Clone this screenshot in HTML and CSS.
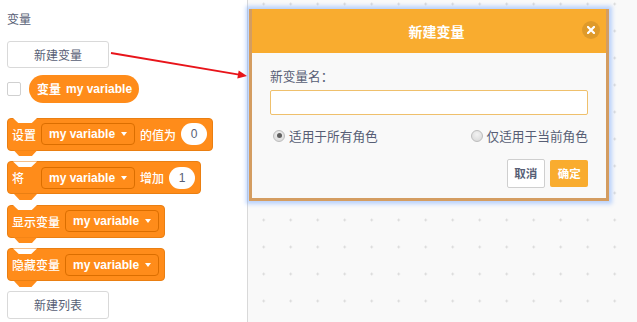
FILE: index.html
```html
<!DOCTYPE html>
<html lang="zh-CN">
<head>
<meta charset="utf-8">
<title>新建变量</title>
<link rel="stylesheet" href="styles.css">
</head>
<body>
<div class="app">
  <aside class="palette">
    <div class="cat-title">变量</div>
    <button class="pal-btn">新建变量</button>
    <div class="var-row">
      <span class="checkbox"></span>
      <span class="reporter"><span class="rep-cjk">变量</span><span class="vname">my variable</span></span>
    </div>
    <div class="block">
      <span class="lbl">设置</span>
      <span class="dd"><span class="vname">my variable</span><i class="tri"></i></span>
      <span class="lbl">的值为</span>
      <span class="oval">0</span>
    </div>
    <div class="block">
      <span class="lbl lbl-wide">将</span>
      <span class="dd"><span class="vname">my variable</span><i class="tri"></i></span>
      <span class="lbl">增加</span>
      <span class="oval">1</span>
    </div>
    <div class="block">
      <span class="lbl">显示变量</span>
      <span class="dd"><span class="vname">my variable</span><i class="tri"></i></span>
    </div>
    <div class="block">
      <span class="lbl">隐藏变量</span>
      <span class="dd"><span class="vname">my variable</span><i class="tri"></i></span>
    </div>
    <button class="pal-btn pal-btn-last">新建列表</button>
  </aside>
  <main class="canvas"></main>

  <div class="modal">
    <div class="modal-head">
      <div class="modal-title">新建变量</div>
      <span class="close">
        <svg width="8" height="8" viewBox="0 0 8 8"><path d="M1 1 L7 7 M7 1 L1 7" stroke="#fff" stroke-width="2.2" stroke-linecap="square"/></svg>
      </span>
    </div>
    <div class="modal-body">
      <div class="field-label">新变量名：</div>
      <div class="name-input"></div>
      <div class="radio-row">
        <label class="radio"><span class="radio-dot on"></span>适用于所有角色</label>
        <label class="radio"><span class="radio-dot"></span>仅适用于当前角色</label>
      </div>
      <div class="actions">
        <button class="btn-cancel">取消</button>
        <button class="btn-ok">确定</button>
      </div>
    </div>
  </div>

  <svg class="arrow" width="637" height="322" viewBox="0 0 637 322">
    <line x1="111" y1="53" x2="239" y2="74.6" stroke="#e8141a" stroke-width="1.8"/>
    <polygon points="247,76 237.3,78.6 238.7,70.4" fill="#e8141a"/>
  </svg>
</div>
</body>
</html>
```
FILE: styles.css
```css
* { box-sizing: border-box; }
html, body { margin: 0; padding: 0; }
body {
  width: 637px;
  height: 322px;
  overflow: hidden;
  font-family: "Liberation Sans", "Noto Sans CJK SC", sans-serif;
  color: #575e75;
  background: #f9f9f9;
}
.app {
  position: relative;
  display: flex;
  width: 637px;
  height: 322px;
}
.palette {
  width: 248px;
  flex: none;
  background: #ffffff;
  border-right: 1px solid #d9d9d9;
  padding-left: 7px;
  display: flex;
  flex-direction: column;
  align-items: flex-start;
}
.canvas {
  flex: 1;
  background-color: #f9f9f9;
  background-image: radial-gradient(circle, #d6d6d6 0.9px, rgba(214,214,214,0) 1.4px);
  background-size: 27px 27px;
  background-position: 2.2px -9.5px;
}
.cat-title {
  margin-top: 11px;
  font-size: 12px;
  line-height: 16px;
  font-family: "Noto Sans CJK SC", sans-serif;
}
.pal-btn {
  margin-top: 13.7px;
  width: 102px;
  height: 27px;
  background: #fff;
  border: 1px solid #d9d9d9;
  border-radius: 3px;
  font-family: "Noto Sans CJK SC", sans-serif;
  font-size: 12px;
  color: #575e75;
  padding: 0;
}
.pal-btn-last { margin-top: 9.5px; height: 27.7px; }
.var-row {
  margin-top: 7.3px;
  height: 28px;
  display: flex;
  align-items: center;
  gap: 8px;
}
.checkbox {
  width: 14px;
  height: 14px;
  border: 1px solid #d0d0d0;
  border-radius: 2px;
  background: #fff;
  margin-top: 1px;
}
.reporter {
  height: 28px;
  width: 110px;
  border-radius: 14px;
  background: #ff8c1a;
  color: #fff;
  display: flex;
  align-items: center;
  padding-left: 8px;
  gap: 5px;
  font-size: 12px;
}
.rep-cjk { font-family: "Noto Sans CJK SC", sans-serif; font-weight: 700; }
.vname { font-weight: 700; font-size: 12px; font-family: "Liberation Sans", sans-serif; }

.block {
  position: relative;
  height: 33px;
  margin-top: 10.5px;
  background: #ff8c1a;
  border: 1px solid #ea7f12;
  border-radius: 4px;
  display: flex;
  align-items: center;
  gap: 5px;
  padding: 0 5px 0 4px;
  color: #fff;
  font-size: 12px;
}
.var-row + .block { margin-top: 15px; }
.block::before {
  content: "";
  position: absolute;
  top: -1px;
  left: 5px;
  width: 24px;
  height: 5.5px;
  background: #fff;
  clip-path: polygon(0 0, 100% 0, 76% 100%, 24% 100%);
}
.block::after {
  content: "";
  position: absolute;
  bottom: -6.5px;
  left: 6px;
  width: 23px;
  height: 6px;
  background: #ff8c1a;
  clip-path: polygon(0 0, 100% 0, 76% 100%, 24% 100%);
}
.lbl { font-family: "Noto Sans CJK SC", sans-serif; font-weight: 500; white-space: nowrap; }
.lbl-wide { margin-right: 12px; }
.dd {
  width: 94px;
  height: 22px;
  border: 1px solid #db6e00;
  border-radius: 4px;
  background: #ff8c1a;
  display: flex;
  align-items: center;
  padding-left: 7px;
  gap: 6px;
}
.tri {
  width: 0;
  height: 0;
  border-left: 3.5px solid transparent;
  border-right: 3.5px solid transparent;
  border-top: 4px solid #fff;
}
.oval {
  width: 26px;
  height: 22px;
  border-radius: 11px;
  background: #fff;
  color: #575e75;
  font-size: 12px;
  display: flex;
  align-items: center;
  justify-content: center;
}

.modal {
  position: absolute;
  left: 249px;
  top: 9px;
  width: 360px;
  background: #f9f9f9;
  border: 3px solid #d49d61;
  border-top: 0;
  box-shadow: 0 0 4px 3px rgba(110, 165, 255, 0.45);
}
.modal-head {
  height: 44px;
  background: #f9ac2f;
  display: flex;
  align-items: center;
  padding-right: 6px;
}
.modal-title {
  flex: 1;
  text-align: center;
  padding-left: 39px;
  color: #fff;
  font-weight: 700;
  font-size: 14px;
  font-family: "Noto Sans CJK SC", sans-serif;
}
.close {
  width: 18px;
  height: 18px;
  border-radius: 50%;
  background: rgba(0, 0, 0, 0.1);
  display: flex;
  align-items: center;
  justify-content: center;
  margin-top: -2px;
}
.modal-body {
  padding: 14px 18px 10px;
  font-family: "Noto Sans CJK SC", sans-serif;
}
.field-label {
  font-size: 12.7px;
  line-height: 18px;
}
.name-input {
  margin-top: 4.6px;
  height: 25px;
  background: #fff;
  border: 1.5px solid #efc06c;
  border-radius: 2px;
}
.radio-row {
  margin-top: 12.2px;
  height: 18px;
  display: flex;
  justify-content: space-between;
  align-items: center;
  font-size: 12.7px;
  padding-left: 3px;
}
.radio {
  display: flex;
  align-items: center;
  gap: 4px;
}
.radio-dot {
  width: 12px;
  height: 12px;
  border-radius: 50%;
  border: 1px solid #bdbdbd;
  background: radial-gradient(circle at 50% 35%, #f2f2f2, #d6d6d6);
  display: flex;
  align-items: center;
  justify-content: center;
}
.radio-dot.on::after {
  content: "";
  width: 5px;
  height: 5px;
  border-radius: 50%;
  background: #606060;
}
.actions {
  margin-top: 13.8px;
  display: flex;
  justify-content: flex-end;
  align-items: center;
  gap: 5.3px;
}
.btn-cancel, .btn-ok {
  font-family: "Noto Sans CJK SC", sans-serif;
  font-size: 11.5px;
  font-weight: 700;
  padding: 0;
  border-radius: 2px;
}
.btn-cancel {
  width: 38.4px;
  height: 29.4px;
  background: #fff;
  border: 1px solid #cfcfcf;
  color: #575e75;
}
.btn-ok {
  width: 37.7px;
  height: 27.4px;
  background: #f9ac2f;
  border: 0;
  color: #fff;
}
.arrow {
  position: absolute;
  left: 0;
  top: 0;
  pointer-events: none;
}
```
